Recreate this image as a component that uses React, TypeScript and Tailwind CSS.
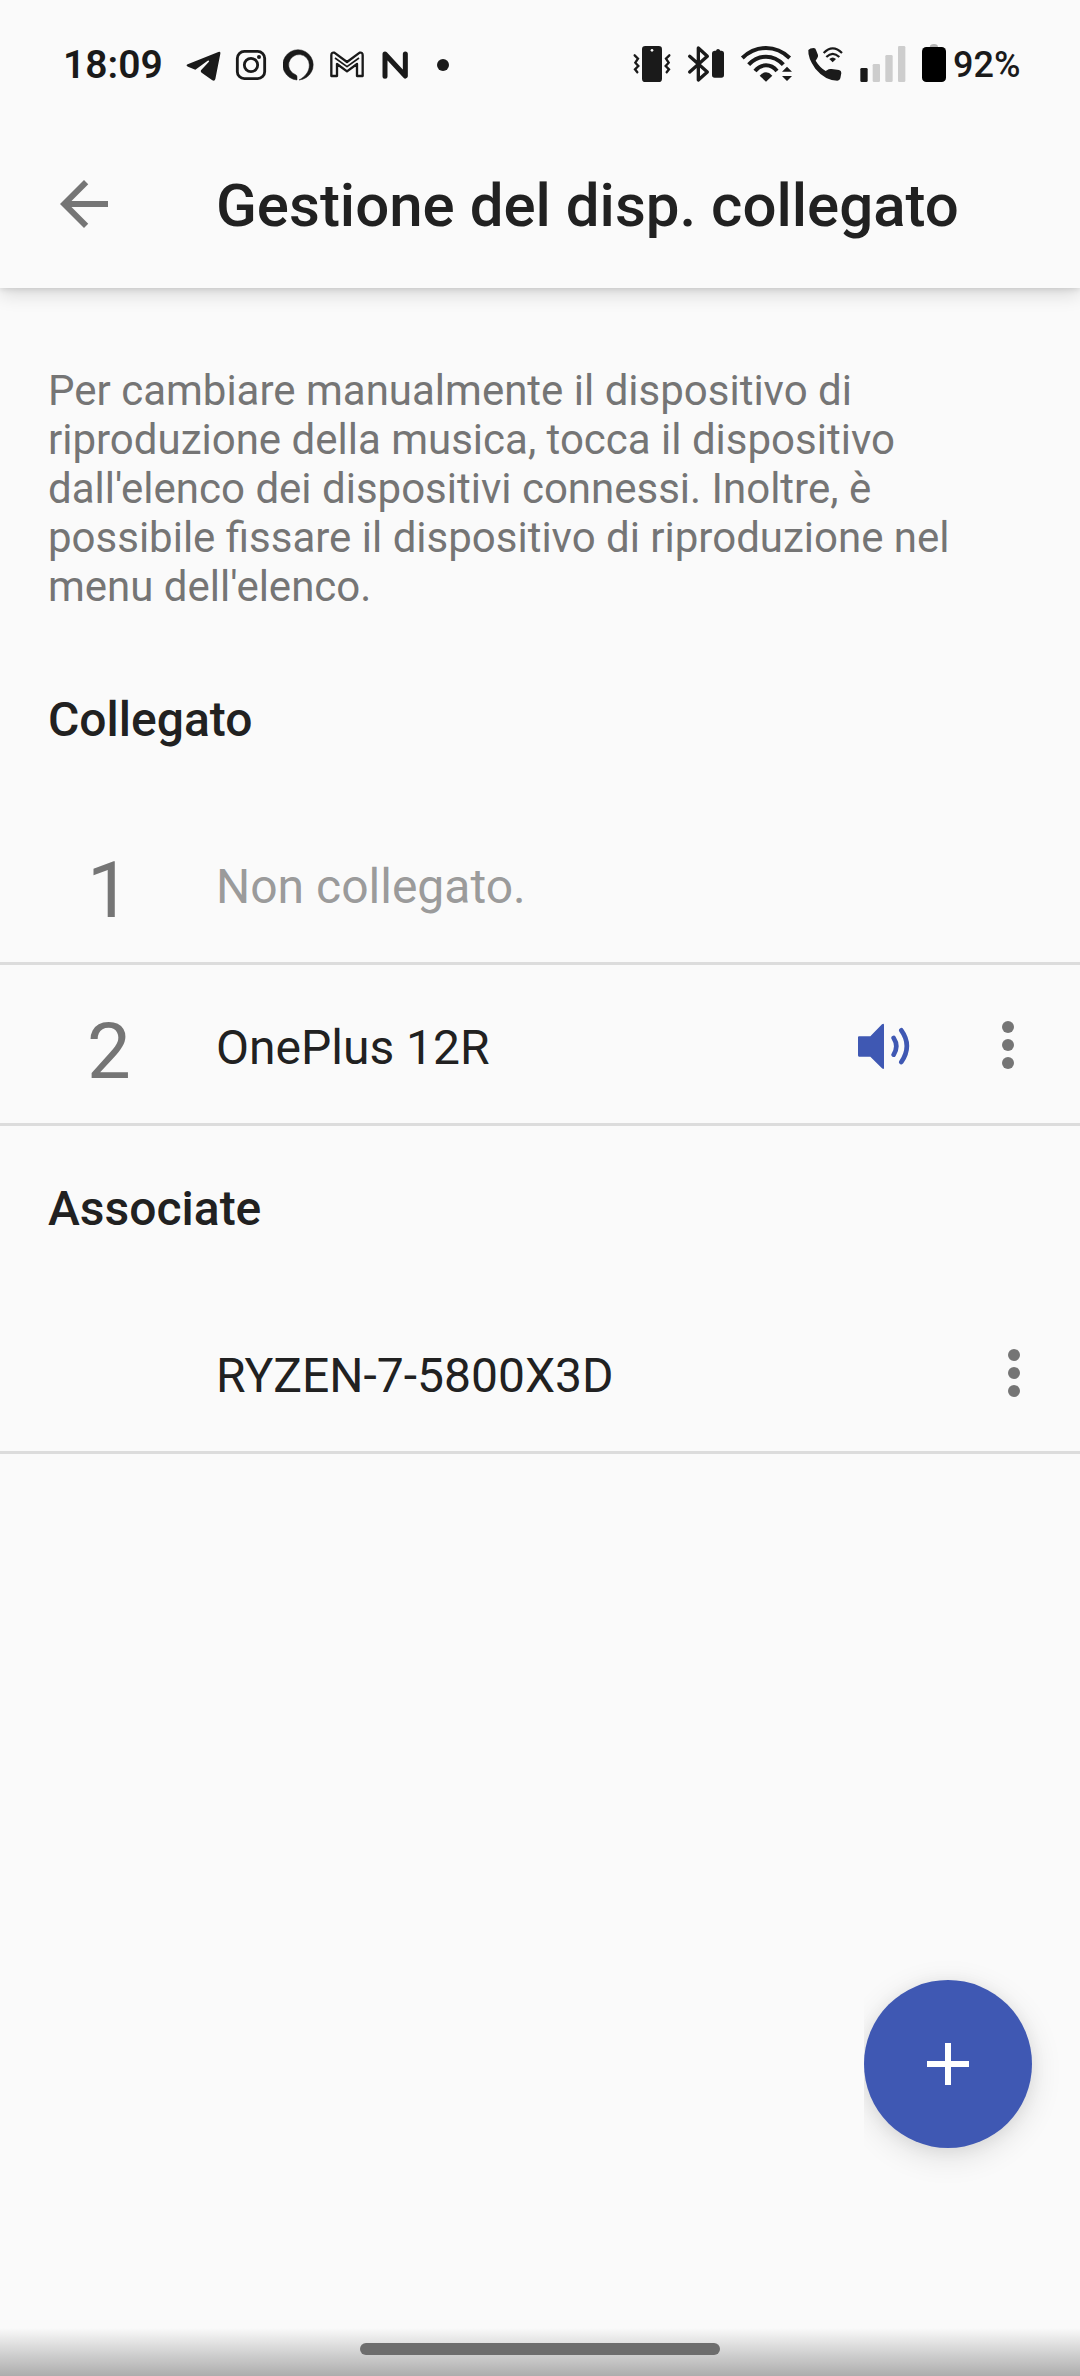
import type { ReactNode } from 'react';

function StatusBar() {
  return (
    <div className="flex h-[70px] items-center text-[#1a1a1a]">
      <span className="w-[123px] text-[39px] leading-[70px] font-semibold whitespace-nowrap">18:09</span>

      {/* Telegram */}
      <svg className="h-[70px] w-[35px]" viewBox="438 0 105 210" fill="currentColor">
        <path d="M535 66 443 103Q436 107 444 110L466 119 503 92Q510 90 506 96L483 121Q481 125 485 128L517 151Q524 155 526 147L541 71Q542 63 535 66Z" />
      </svg>

      {/* Instagram */}
      <svg className="ml-[14px] h-[70px] w-[32px]" viewBox="585 0 96 210" fill="none" stroke="currentColor" strokeWidth="8.5">
        <rect x="592" y="64" width="82" height="82" rx="21" />
        <circle cx="633" cy="105" r="20" />
        <circle cx="657" cy="81" r="6" fill="currentColor" stroke="none" />
      </svg>

      {/* Alexa */}
      <svg className="ml-4 h-[70px] w-[32px]" viewBox="729 0 96 210" fill="currentColor">
        <path d="M771 150V140Q771 136 767 134A31 31 0 1 1 808 105C808 126 795 140 777 150A45.500 45.500 0 1 0 771 150Z" stroke="currentColor" strokeWidth="1.5" />
      </svg>

      {/* Gmail */}
      <svg className="ml-[14px] h-[70px] w-[36px]" viewBox="867 0 108 210" fill="none" stroke="currentColor" strokeWidth="7" strokeLinejoin="round">
        <path d="M874 138V76Q874 66 883 68L921 96 959 68Q968 66 968 76V138H951V102L921 124 891 102V138Z" />
        <path d="M885 84 921 110 957 84" strokeWidth="5" />
      </svg>

      {/* N */}
      <svg className="ml-4 h-[70px] w-[28px]" viewBox="1023 0 84 210" fill="none" stroke="currentColor" strokeWidth="15" strokeLinecap="round" strokeLinejoin="round">
        <path d="M1035 139V72L1096 138V72" />
      </svg>

      <div className="ml-[28px] h-3 w-3 rounded-full bg-[#1a1a1a]" />

      <div className="ml-auto flex items-center">
        {/* Vibration */}
        <svg className="h-[70px] w-[38px]" viewBox="66 0 114 210" fill="none" stroke="currentColor" strokeWidth="7">
          <rect x="93" y="48" width="60" height="108" rx="10" fill="currentColor" stroke="none" />
          <circle cx="123" cy="61" r="4" fill="#fafafa" stroke="none" />
          <path d="M71 76 81 86 73 98 82 108 72 118 79 127M175 76 165 86 173 98 164 108 174 118 167 127" strokeLinecap="round" />
        </svg>

        {/* Bluetooth */}
        <svg className="ml-4 h-[70px] w-[38px]" viewBox="228 0 114 210" fill="none" stroke="currentColor" strokeWidth="10">
          <path d="M236 79 289 126 262 150V54L289 79 236 126" strokeLinecap="round" strokeLinejoin="round" />
          <path d="M311 62H315Q316 57 321 57T328 62H332Q339 63 339 69V135Q339 143 331 143H311Q303 143 303 135V69Q303 63 311 62Z" fill="currentColor" stroke="none" />
        </svg>

        {/* Wi-Fi */}
        <svg className="ml-[15px] h-[70px] w-[53px]" viewBox="387 0 159 210" fill="none" stroke="currentColor" strokeWidth="12">
          <path d="M394 84Q425 54 465 54T536 84M413 104Q435 80 465 80T517 104M432 123Q446 106 465 106T498 123" />
          <path d="M446 137Q465 117 484 137L465 155Z" fill="currentColor" stroke="none" />
          <path d="M513 125 528 110 543 125ZM513 138 528 153 543 138Z" fill="currentColor" stroke="none" />
        </svg>

        {/* Wi-Fi calling */}
        <svg className="ml-[14px] h-[70px] w-[37px]" viewBox="588 0 111 210" fill="none" stroke="currentColor" strokeWidth="6.5">
          <path d="M592 60Q597 54 608 54Q614 54 615 60L621 75Q622 80 619 84L614 92Q626 112 644 123L653 118Q657 116 662 117L684 120Q691 122 691 129L688 145Q686 152 679 152Q642 151 613 116Q590 84 592 60Z" fill="currentColor" stroke="none" />
          <path d="M638 69Q665 41 693 69M646 81Q665 62 685 81" />
          <path d="M655 87Q665 78 675 87L665 97Z" fill="currentColor" stroke="none" />
        </svg>

        {/* Signal */}
        <svg className="ml-[15px] h-[70px] w-[47px]" viewBox="744 0 141 210" fill="#cdcdcd">
          <rect x="748" y="114" width="22" height="42" rx="4" fill="#1a1a1a" />
          <rect x="785" y="102" width="22" height="54" rx="4" />
          <rect x="823" y="75" width="22" height="81" rx="4" />
          <rect x="861" y="48" width="22" height="108" rx="4" />
        </svg>

        {/* Battery */}
        <svg className="ml-[15px] h-[70px] w-[26px]" viewBox="930 0 78 210">
          <path d="M956 52Q957 42 969 42T981 52Z" fill="#b5b5b5" />
          <rect x="933" y="51" width="72" height="105" rx="13" fill="#000" />
        </svg>
        <span className="ml-[6px] w-[69px] text-[36px] leading-[70px] font-medium whitespace-nowrap">92%</span>
      </div>
    </div>
  );
}

function MoreIcon() {
  return (
    <svg className="h-12 w-3" viewBox="0 0 12 48" fill="#757575">
      <circle cx="6" cy="6" r="6" />
      <circle cx="6" cy="24" r="6" />
      <circle cx="6" cy="42" r="6" />
    </svg>
  );
}

function SpeakerIcon() {
  return (
    <svg className="h-[48px] w-[54px]" viewBox="0 0 162 144" fill="none" stroke="#3f58b3" strokeWidth="14" strokeLinecap="round">
      <path d="M3 40H37L72 4Q78 -1 78 6V134Q78 141 72 136L37 101H3Q0 101 0 97V43Q0 40 3 40Z" fill="#3f58b3" stroke="none" />
      <path d="M107 45Q123 70 107 95M130 22Q163 68 130 117" />
    </svg>
  );
}

function SectionTitle({ children }: { children: ReactNode }) {
  return (
    <h2 className="flex h-[167px] items-center pb-[2px] pl-12 text-[48px] leading-[56px] font-medium">{children}</h2>
  );
}

function DeviceRow({ index, name, muted, children }: { index?: number; name: string; muted?: boolean; children?: ReactNode }) {
  return (
    <div className="flex h-[161px] items-center border-b-[3px] border-[#dcdcdc]">
      <div className="w-[216px] pt-[16px] pl-[2px] text-center text-[78px] leading-[90px] text-[#757575]">{index}</div>
      <div className={muted ? 'pt-[7px] text-[48px] leading-[56px] text-[#9b9b9b]' : 'pt-[7px] text-[48px] leading-[56px]'}>
        {name}
      </div>
      <div className="ml-auto flex items-center">{children}</div>
    </div>
  );
}

export default function App() {
  return (
    <div className="relative flex h-[2376px] w-[1080px] flex-col overflow-hidden bg-[#fafafa] font-['Roboto',sans-serif] text-[#212121]">
      <header className="h-[288px] shrink-0 shadow-[0_6px_18px_rgba(0,0,0,0.14),0_1px_6px_rgba(0,0,0,0.12)]">
        <div className="pt-[30px] pr-[58px] pl-[63px]">
          <StatusBar />
        </div>
        <div className="flex h-[188px] items-center">
          <svg className="mt-[20px] ml-[60px] h-12 w-12" viewBox="4 4 16 16" fill="#757575">
            <path d="M20 11H7.830l5.590-5.590L12 4l-8 8 8 8 1.410-1.410L7.830 13H20v-2z" />
          </svg>
          <h1 className="mt-[24px] ml-[108px] text-[60px] leading-[70px] font-medium whitespace-nowrap">
            Gestione del disp. collegato
          </h1>
        </div>
      </header>

      <main>
        <p className="mt-[78px] mb-[26px] w-[984px] pl-12 text-[42px] leading-[49px] text-[#757575]">
          Per cambiare manualmente il dispositivo di<br />
          riproduzione della musica, tocca il dispositivo<br />
          dall'elenco dei dispositivi connessi. Inoltre, è<br />
          possibile fissare il dispositivo di riproduzione nel<br />
          menu dell'elenco.
        </p>

        <SectionTitle>Collegato</SectionTitle>
        <DeviceRow index={1} name="Non collegato." muted />
        <DeviceRow index={2} name="OnePlus 12R">
          <div className="mt-[5px]">
            <SpeakerIcon />
          </div>
          <div className="mt-[2px] mr-[66px] ml-[90px]">
            <MoreIcon />
          </div>
        </DeviceRow>

        <SectionTitle>Associate</SectionTitle>
        <DeviceRow name="RYZEN-7-5800X3D">
          <div className="mt-[2px] mr-[60px]">
            <MoreIcon />
          </div>
        </DeviceRow>
      </main>

      {/* Floating add button, its shadow is cut at the left edge */}
      <div className="absolute top-[1932px] right-0 h-[280px] w-[216px] overflow-hidden pt-12">
        <button className="flex h-[168px] w-[168px] items-center justify-center rounded-full bg-[#3f58b3] shadow-[0_8px_32px_rgba(0,0,0,0.12),0_2px_16px_rgba(0,0,0,0.06)]">
          <svg className="h-[42px] w-[42px]" viewBox="0 0 42 42" fill="#fff">
            <path d="M18 0H24V18H42V24H24V42H18V24H0V18H18Z" />
          </svg>
        </button>
      </div>

      <div className="mt-auto flex h-[48px] justify-center bg-gradient-to-b from-[#fafafa] to-[#adadad] pt-[15px]">
        <div className="h-3 w-[360px] rounded-full bg-[#6d6d6d]" />
      </div>
    </div>
  );
}
